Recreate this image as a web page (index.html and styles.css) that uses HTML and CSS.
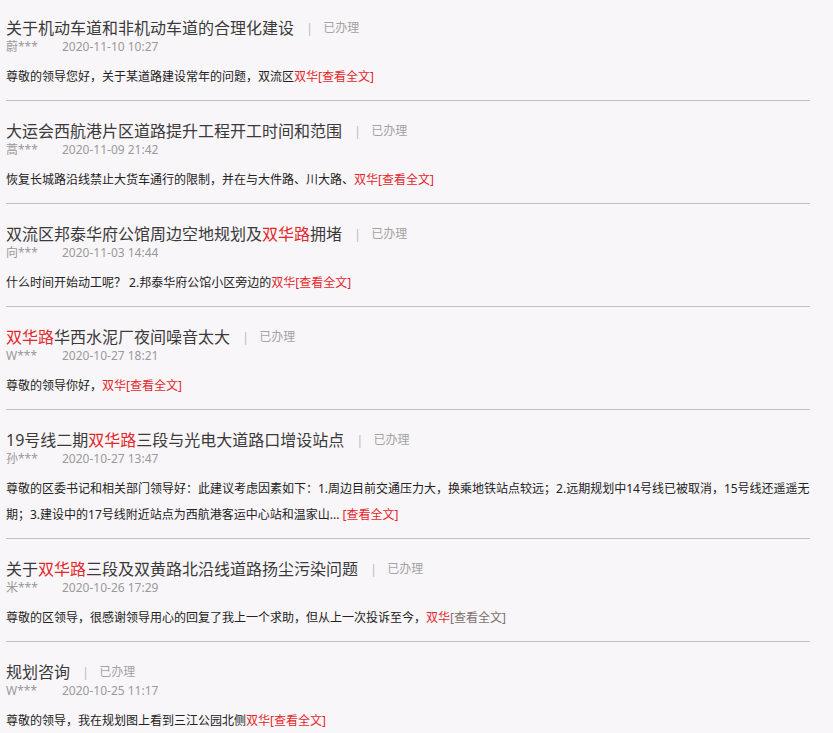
FILE: index.html
```html
<!DOCTYPE html>
<html lang="zh-CN">
<head>
    <meta charset="UTF-8">
    <title>问政列表</title>
    <link rel="stylesheet" href="styles.css">
</head>
<body>
<div class="list">
    <div class="item">
        <div class="title">关于机动车道和非机动车道的合理化建设<span class="sep">|</span><span class="state">已办理</span></div>
        <div class="meta"><span class="name">蔚***</span><span class="time">2020-11-10 10:27</span></div>
        <p class="desc">尊敬的领导您好，关于某道路建设常年的问题，双流区<em>双华</em><a href="#">[查看全文]</a></p>
    </div>
    <div class="item">
        <div class="title">大运会西航港片区道路提升工程开工时间和范围<span class="sep">|</span><span class="state">已办理</span></div>
        <div class="meta"><span class="name">蒿***</span><span class="time">2020-11-09 21:42</span></div>
        <p class="desc">恢复长城路沿线禁止大货车通行的限制，并在与大件路、川大路、<em>双华</em><a href="#">[查看全文]</a></p>
    </div>
    <div class="item">
        <div class="title">双流区邦泰华府公馆周边空地规划及<em>双华路</em>拥堵<span class="sep">|</span><span class="state">已办理</span></div>
        <div class="meta"><span class="name">向***</span><span class="time">2020-11-03 14:44</span></div>
        <p class="desc">什么时间开始动工呢？ 2.邦泰华府公馆小区旁边的<em>双华</em><a href="#">[查看全文]</a></p>
    </div>
    <div class="item">
        <div class="title"><em>双华路</em>华西水泥厂夜间噪音太大<span class="sep">|</span><span class="state">已办理</span></div>
        <div class="meta"><span class="name">W***</span><span class="time">2020-10-27 18:21</span></div>
        <p class="desc">尊敬的领导你好，<em>双华</em><a href="#">[查看全文]</a></p>
    </div>
    <div class="item">
        <div class="title">19号线二期<em>双华路</em>三段与光电大道路口增设站点<span class="sep">|</span><span class="state">已办理</span></div>
        <div class="meta"><span class="name">孙***</span><span class="time">2020-10-27 13:47</span></div>
        <p class="desc">尊敬的区委书记和相关部门领导好：此建议考虑因素如下：1.周边目前交通压力大，换乘地铁站点较远；2.远期规划中14号线已被取消，15号线还遥遥无期；3.建设中的17号线附近站点为西航港客运中心站和温家山... <a href="#">[查看全文]</a></p>
    </div>
    <div class="item">
        <div class="title">关于<em>双华路</em>三段及双黄路北沿线道路扬尘污染问题<span class="sep">|</span><span class="state">已办理</span></div>
        <div class="meta"><span class="name">米***</span><span class="time">2020-10-26 17:29</span></div>
        <p class="desc">尊敬的区领导，很感谢领导用心的回复了我上一个求助，但从上一次投诉至今，<em>双华</em><a href="#" class="visited">[查看全文]</a></p>
    </div>
    <div class="item">
        <div class="title">规划咨询<span class="sep">|</span><span class="state">已办理</span></div>
        <div class="meta"><span class="name">W***</span><span class="time">2020-10-25 11:17</span></div>
        <p class="desc">尊敬的领导，我在规划图上看到三江公园北侧<em>双华</em><a href="#">[查看全文]</a></p>
    </div>
</div>
</body>
</html>
```

FILE: styles.css
```css
body {
    margin: 0;
    background: #f9f6f9;
    font-family: "Noto Sans", "Noto Sans CJK SC", sans-serif;
    color: #333;
}
.list {
    padding: 18px 23px 0 6px;
}
.item {
    border-bottom: 1px solid #c2bec2;
    padding-bottom: 10px;
    margin-bottom: 20px;
}
.item:last-child {
    border-bottom: none;
}
.title {
    height: 20px;
    font-size: 16px;
    line-height: 20px;
    color: #3a3a3a;
    white-space: nowrap;
}
.title em,
.desc em {
    font-style: normal;
    color: #e3262b;
}
.sep {
    margin: 0 10px 0 12px;
    font-size: 13px;
    color: #bdbdbd;
    vertical-align: top;
}
.state {
    font-size: 12px;
    color: #a3a3a3;
    vertical-align: top;
}
.meta {
    height: 18px;
    font-size: 12px;
    line-height: 18px;
    color: #9a9a9a;
}
.name {
    display: inline-block;
    width: 56px;
}
.desc {
    margin: 8px 0 0;
    font-size: 12px;
    line-height: 26px;
    color: #222;
}
.desc a {
    color: #e3262b;
    text-decoration: none;
}
.desc a.visited {
    color: #7d6e6e;
}
```
